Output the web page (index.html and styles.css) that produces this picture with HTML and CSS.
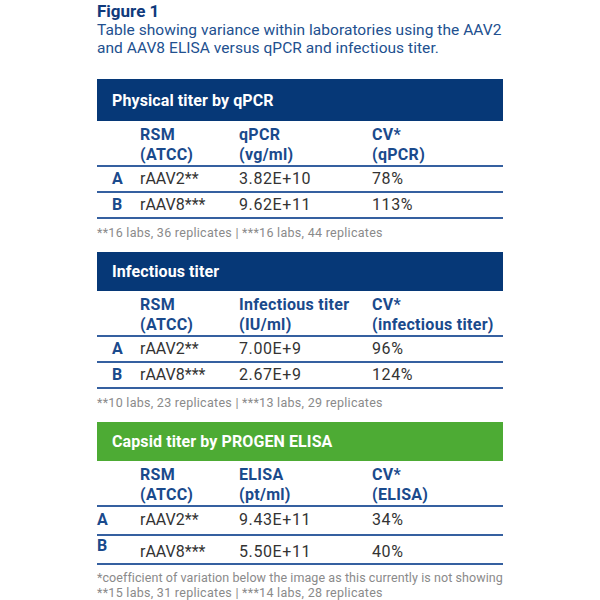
FILE: index.html
```html
<!DOCTYPE html>
<html lang="en">
<head>
<meta charset="utf-8">
<title>Figure 1</title>
<link rel="stylesheet" href="styles.css">
</head>
<body>
<div class="figure">
  <h1 class="fig-title">Figure 1</h1>
  <p class="fig-caption">Table showing variance within laboratories using the AAV2 and AAV8 ELISA versus qPCR and infectious titer.</p>

  <section class="block">
    <div class="bar bar-blue">Physical titer by qPCR</div>
    <table class="data">
      <colgroup><col class="c1"><col class="c2"><col class="c3"><col class="c4"></colgroup>
      <thead>
        <tr><th></th><th>RSM<br>(ATCC)</th><th>qPCR<br>(vg/ml)</th><th>CV*<br>(qPCR)</th></tr>
      </thead>
      <tbody>
        <tr><td class="lab">A</td><td>rAAV2**</td><td class="num">3.82E+10</td><td class="num">78%</td></tr>
        <tr><td class="lab">B</td><td>rAAV8***</td><td class="num">9.62E+11</td><td class="num">113%</td></tr>
      </tbody>
    </table>
    <p class="note">**16 labs, 36 replicates | ***16 labs, 44 replicates</p>
  </section>

  <section class="block">
    <div class="bar bar-blue">Infectious titer</div>
    <table class="data">
      <colgroup><col class="c1"><col class="c2"><col class="c3"><col class="c4"></colgroup>
      <thead>
        <tr><th></th><th>RSM<br>(ATCC)</th><th>Infectious titer<br>(IU/ml)</th><th>CV*<br>(infectious titer)</th></tr>
      </thead>
      <tbody>
        <tr><td class="lab">A</td><td>rAAV2**</td><td class="num">7.00E+9</td><td class="num">96%</td></tr>
        <tr><td class="lab">B</td><td>rAAV8***</td><td class="num">2.67E+9</td><td class="num">124%</td></tr>
      </tbody>
    </table>
    <p class="note">**10 labs, 23 replicates | ***13 labs, 29 replicates</p>
  </section>

  <section class="block">
    <div class="bar bar-green">Capsid titer by PROGEN ELISA</div>
    <table class="data tall">
      <colgroup><col class="c1"><col class="c2"><col class="c3"><col class="c4"></colgroup>
      <thead>
        <tr><th></th><th>RSM<br>(ATCC)</th><th>ELISA<br>(pt/ml)</th><th>CV*<br>(ELISA)</th></tr>
      </thead>
      <tbody>
        <tr><td class="lab">A</td><td>rAAV2**</td><td class="num">9.43E+11</td><td class="num">34%</td></tr>
        <tr class="rowb"><td class="lab">B</td><td>rAAV8***</td><td class="num">5.50E+11</td><td class="num">40%</td></tr>
      </tbody>
    </table>
    <p class="note note-last"><span class="note-wide">*coefficient of variation below the image as this currently is not showing</span><br>**15 labs, 31 replicates | ***14 labs, 28 replicates</p>
  </section>
</div>
</body>
</html>
```

FILE: styles.css
```css
html, body {
  margin: 0;
  padding: 0;
  background: #ffffff;
}

body {
  font-family: Roboto, "Liberation Sans", sans-serif;
  color: #333333;
}

.figure {
  width: 406px;
  margin: 0 auto;
}

.fig-title {
  margin: 0;
  padding-top: 1px;
  font-size: 17px;
  line-height: 20px;
  font-weight: 700;
  color: #0f3a7c;
}

.fig-caption {
  margin: 0;
  font-size: 15.5px;
  letter-spacing: 0.05px;
  line-height: 18px;
  color: #22508f;
}

.block {
  margin-top: 12px;
}

.block:first-of-type {
  margin-top: 22px;
}

.bar {
  height: 42px;
  display: flex;
  align-items: center;
  padding-left: 15px;
  font-size: 16px;
  font-weight: 700;
  letter-spacing: 0.1px;
  color: #ffffff;
}

.bar-blue {
  background: #063877;
}

.bar-green {
  background: #4dab34;
  height: 39px;
}

.block + .block .bar-blue {
  height: 39px;
}

.data {
  width: 406px;
  border-collapse: collapse;
  table-layout: fixed;
  font-size: 16px;
}

.c1 { width: 43px; }
.c2 { width: 99px; }
.c3 { width: 133px; }
.c4 { width: 131px; }

.data th {
  text-align: left;
  font-weight: 700;
  letter-spacing: 0.3px;
  color: #1a4a8c;
  line-height: 20px;
  padding: 4px 0 0;
  border-bottom: 2px solid #3560a0;
  white-space: nowrap;
  vertical-align: top;
}

.data td {
  line-height: 20px;
  padding: 2px 0 2px;
  border-bottom: 2px solid #3560a0;
  white-space: nowrap;
}

.data td.num {
  letter-spacing: 0.6px;
}

.data td.lab {
  padding-left: 15px;
  font-weight: 700;
  color: #1a4a8c;
}

.data.tall td {
  padding: 3px 0 4px;
}

.data.tall tr.rowb td {
  padding: 6px 0 1px;
}

.data.tall tr.rowb td.lab {
  vertical-align: top;
  padding-top: 0;
}

.note {
  margin: 6px 0 0;
  font-size: 12.5px;
  letter-spacing: 0.28px;
  line-height: 15px;
  color: #8a8a8a;
  white-space: nowrap;
}

.note-last {
  margin-top: 5px;
}

.note-wide {
  letter-spacing: 0.08px;
}
```
